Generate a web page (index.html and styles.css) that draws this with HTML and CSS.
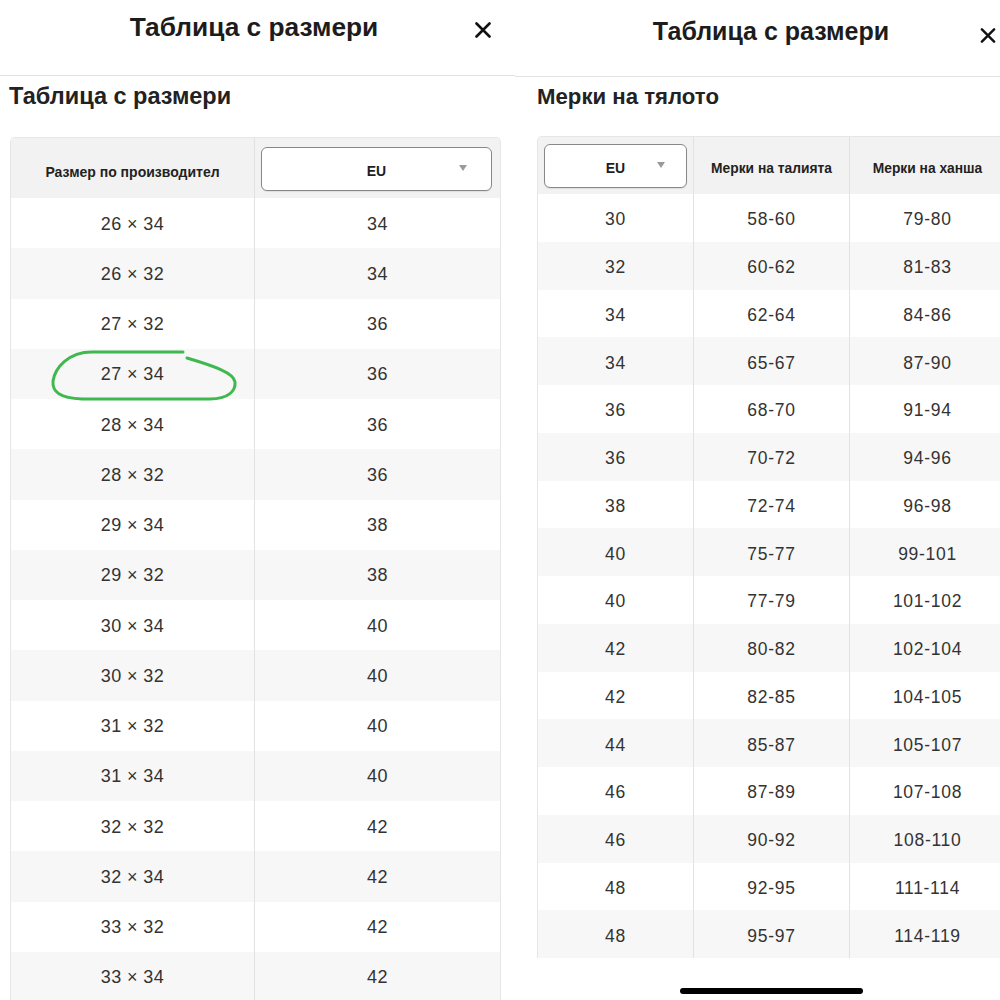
FILE: index.html
```html
<!DOCTYPE html>
<html lang="bg">
<head>
<meta charset="utf-8">
<title>Таблица с размери</title>
<link rel="stylesheet" href="styles.css">
</head>
<body>
<div class="page">
  <section class="panel panel-left">
    <header class="topbar">
      <span></span>
      <h1 class="title">Таблица с размери</h1>
      <button class="close" aria-label="Затвори">
        <svg viewBox="0 0 16 16" width="16" height="16"><path d="M1.5 1.5 L14.5 14.5 M14.5 1.5 L1.5 14.5" stroke="#111" stroke-width="2.6" stroke-linecap="round"/></svg>
      </button>
    </header>
    <h2 class="heading">Таблица с размери</h2>
    <div class="tbl tbl-left">
      <div class="th">Размер по производител</div>
      <div class="th th-sel"><div class="select"><span></span><span class="sel-text">EU</span><span class="caret"></span></div></div>
      <div class="td">26 × 34</div><div class="td">34</div>
      <div class="td alt">26 × 32</div><div class="td alt">34</div>
      <div class="td">27 × 32</div><div class="td">36</div>
      <div class="td alt">27 × 34</div><div class="td alt">36</div>
      <div class="td">28 × 34</div><div class="td">36</div>
      <div class="td alt">28 × 32</div><div class="td alt">36</div>
      <div class="td">29 × 34</div><div class="td">38</div>
      <div class="td alt">29 × 32</div><div class="td alt">38</div>
      <div class="td">30 × 34</div><div class="td">40</div>
      <div class="td alt">30 × 32</div><div class="td alt">40</div>
      <div class="td">31 × 32</div><div class="td">40</div>
      <div class="td alt">31 × 34</div><div class="td alt">40</div>
      <div class="td">32 × 32</div><div class="td">42</div>
      <div class="td alt">32 × 34</div><div class="td alt">42</div>
      <div class="td">33 × 32</div><div class="td">42</div>
      <div class="td alt">33 × 34</div><div class="td alt">42</div>
    </div>
    <svg class="mark" width="515" height="1000" viewBox="0 0 515 1000" aria-hidden="true">
      <path d="M183 352 L92 352 C68 352 55 368 53 381 C52 392 60 398 82 399 L210 399 C228 399 236 391 235 382 C234 373 214 366 187 358" fill="none" stroke="#3fb94f" stroke-width="3" stroke-linecap="round" stroke-linejoin="round"/>
    </svg>
  </section>

  <section class="panel panel-right">
    <div class="inner">
      <header class="topbar topbar-right">
        <span></span>
        <h1 class="title title-right">Таблица с размери</h1>
        <button class="close close-right" aria-label="Затвори">
          <svg viewBox="0 0 16 16" width="16" height="15"><path d="M1.5 1.5 L14.5 14.5 M14.5 1.5 L1.5 14.5" stroke="#111" stroke-width="2.6" stroke-linecap="round"/></svg>
        </button>
      </header>
      <h2 class="heading heading-right">Мерки на тялото</h2>
      <div class="tbl tbl-right">
        <div class="th th-sel"><div class="select"><span></span><span class="sel-text">EU</span><span class="caret"></span></div></div>
        <div class="th">Мерки на талията</div>
        <div class="th">Мерки на ханша</div>
        <div class="td">30</div><div class="td">58-60</div><div class="td">79-80</div>
        <div class="td alt">32</div><div class="td alt">60-62</div><div class="td alt">81-83</div>
        <div class="td">34</div><div class="td">62-64</div><div class="td">84-86</div>
        <div class="td alt">34</div><div class="td alt">65-67</div><div class="td alt">87-90</div>
        <div class="td">36</div><div class="td">68-70</div><div class="td">91-94</div>
        <div class="td alt">36</div><div class="td alt">70-72</div><div class="td alt">94-96</div>
        <div class="td">38</div><div class="td">72-74</div><div class="td">96-98</div>
        <div class="td alt">40</div><div class="td alt">75-77</div><div class="td alt">99-101</div>
        <div class="td">40</div><div class="td">77-79</div><div class="td">101-102</div>
        <div class="td alt">42</div><div class="td alt">80-82</div><div class="td alt">102-104</div>
        <div class="td">42</div><div class="td">82-85</div><div class="td">104-105</div>
        <div class="td alt">44</div><div class="td alt">85-87</div><div class="td alt">105-107</div>
        <div class="td">46</div><div class="td">87-89</div><div class="td">107-108</div>
        <div class="td alt">46</div><div class="td alt">90-92</div><div class="td alt">108-110</div>
        <div class="td">48</div><div class="td">92-95</div><div class="td">111-114</div>
        <div class="td alt">48</div><div class="td alt">95-97</div><div class="td alt">114-119</div>
      </div>
      <div class="home-bar"></div>
    </div>
  </section>
</div>
</body>
</html>
```

FILE: styles.css
```css
* { box-sizing: border-box; }

html, body {
  margin: 0;
  padding: 0;
  background: #fff;
  width: 1000px;
  height: 1000px;
  overflow: hidden;
  font-family: "Liberation Sans", Arial, sans-serif;
  color: #222;
}

.page {
  display: flex;
  width: 1000px;
  height: 1000px;
}

.panel {
  position: relative;
  height: 1000px;
  overflow: hidden;
}

.panel-left {
  width: 515px;
  flex: 0 0 515px;
}

.panel-right {
  width: 485px;
  flex: 0 0 485px;
}

.panel-right .inner {
  width: 512px;
}

/* top bar */
.topbar {
  display: grid;
  grid-template-columns: 1fr auto 1fr;
  align-items: start;
  height: 76px;
  padding: 11px 24px 0 17px;
  border-bottom: 1px solid #e1e1e1;
}

.topbar-right {
  height: 77px;
  padding: 15px 31px 0 31px;
  border-bottom-color: #e3e3e3;
}

.title {
  margin: 0;
  font-size: 26.3px;
  line-height: 32px;
  font-weight: 700;
  color: #1c1c1c;
  white-space: nowrap;
}

.title-right {
  font-size: 25px;
}

.close {
  justify-self: end;
  margin: 11px 0 0 0;
  padding: 0;
  border: 0;
  background: none;
  width: 16px;
  height: 16px;
  display: block;
}

.close svg { display: block; }

.close-right {
  margin-top: 12px;
}

.heading {
  margin: 5px 0 26px 9px;
  font-size: 23.5px;
  line-height: 30px;
  font-weight: 700;
  color: #222;
}

.heading-right {
  margin: 6px 0 25px 22px;
  font-size: 22.2px;
  line-height: 28px;
}

/* tables */
.tbl {
  display: grid;
  border: 1px solid #e6e6e6;
  border-bottom: 0;
  border-radius: 5px 5px 0 0;
  overflow: hidden;
}

.tbl-left {
  margin-left: 10px;
  width: 491px;
  grid-template-columns: 243px 1fr;
  grid-template-rows: 60px;
  grid-auto-rows: 50.25px;
}

.tbl-right {
  margin-left: 22px;
  width: 469px;
  grid-template-columns: 155px 156px 1fr;
  grid-template-rows: 57px;
  grid-auto-rows: 47.75px;
}

.th {
  display: flex;
  align-items: center;
  justify-content: center;
  background: #f2f2f2;
  font-weight: 700;
  font-size: 14px;
  color: #222;
  padding-top: 7px;
  border-left: 1px solid #e2e2e2;
}

.tbl-right .th {
  font-size: 13.8px;
  padding-top: 6px;
}

.th:first-child { border-left: 0; }

.th-sel {
  display: block;
  padding: 9px 8px 7px 6px;
}

.tbl-right .th-sel {
  padding: 7px 6px 6px 6px;
}

.select {
  display: grid;
  grid-template-columns: 1fr auto 1fr;
  align-items: center;
  height: 100%;
  background: #fff;
  border: 1.6px solid #888;
  border-radius: 6px;
  box-shadow: 0 1px 1px rgba(0,0,0,0.08);
}

.sel-text {
  font-weight: 700;
  font-size: 14px;
  color: #1e1e1e;
  padding-top: 4px;
}

.caret {
  justify-self: end;
  margin-right: 24px;
  width: 0;
  height: 0;
  border-left: 4.5px solid transparent;
  border-right: 4.5px solid transparent;
  border-top: 6px solid #9a9a9a;
  margin-top: -2px;
}

.tbl-right .caret {
  margin-right: 21px;
}

.td {
  display: flex;
  align-items: center;
  justify-content: center;
  font-size: 18px;
  letter-spacing: 0.4px;
  color: #333;
  background: #fff;
  padding-top: 2px;
  border-left: 1px solid #e2e2e2;
}

.tbl-left .td:nth-child(odd),
.tbl-right .td:nth-child(3n+1) {
  border-left: 0;
}

.tbl-right .td {
  font-size: 17.5px;
  letter-spacing: 0.7px;
  padding-top: 4px;
}

.td.alt {
  background: #f7f7f7;
}

/* annotation overlay */
.mark {
  position: absolute;
  left: 0;
  top: 0;
  pointer-events: none;
}

/* iOS home indicator */
.home-bar {
  width: 183px;
  height: 6px;
  border-radius: 3px;
  background: #000;
  margin: 30px 0 0 165px;
}
```
